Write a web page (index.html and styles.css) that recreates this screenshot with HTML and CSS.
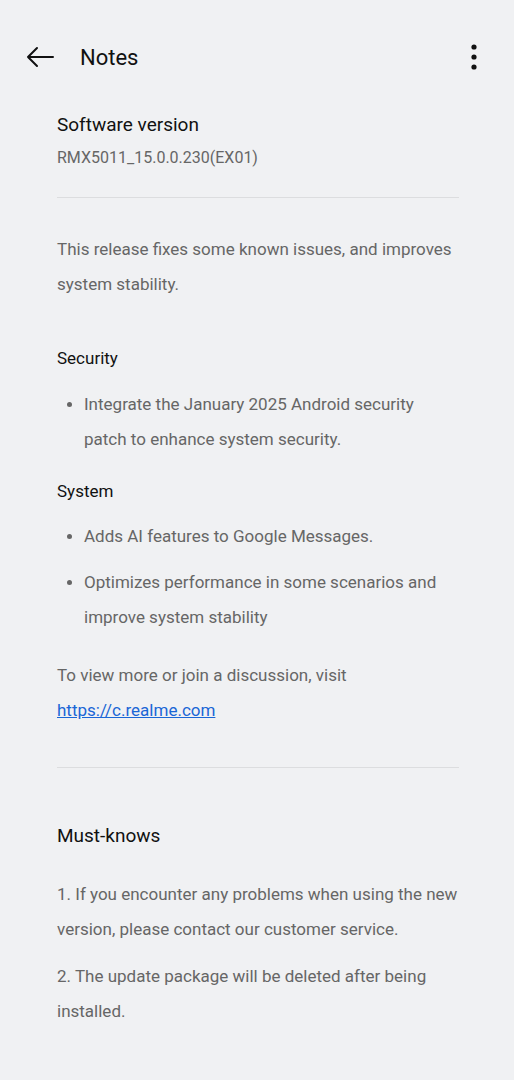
FILE: index.html
```html
<!DOCTYPE html>
<html lang="en">
<head>
<meta charset="UTF-8" />
<meta name="viewport" content="width=device-width, initial-scale=1.0"/>
<title>Notes</title>
<link rel="stylesheet" href="styles.css">
</head>
<body>

<header class="topbar">
  <svg class="back" width="28" height="22" viewBox="0 0 28 22">
    <path d="M27 11H2M11 2L2 11L11 20" fill="none" stroke="#111" stroke-width="2" stroke-linecap="round" stroke-linejoin="round"/>
  </svg>
  <h1>Notes</h1>
  <svg class="more" width="8" height="26" viewBox="0 0 8 26">
    <circle cx="4" cy="3" r="2.6" fill="#111"/>
    <circle cx="4" cy="13" r="2.6" fill="#111"/>
    <circle cx="4" cy="23" r="2.6" fill="#111"/>
  </svg>
</header>

<main class="content">
  <section class="version">
    <h2>Software version</h2>
    <div class="build">RMX5011_15.0.0.230(EX01)</div>
  </section>

  <hr class="divider">

  <section class="notes">
    <p class="intro">This release fixes some known issues, and improves system stability.</p>

    <h3>Security</h3>
    <ul>
      <li>Integrate the January 2025 Android security patch to enhance system security.</li>
    </ul>

    <h3 class="tight">System</h3>
    <ul>
      <li>Adds AI features to Google Messages.</li>
      <li>Optimizes performance in some scenarios and improve system stability</li>
    </ul>

    <p class="visit">To view more or join a discussion, visit<br><a href="#">https://c.realme.com</a></p>
  </section>

  <hr class="divider second">

  <section class="must">
    <h2>Must-knows</h2>
    <p>1. If you encounter any problems when using the new version, please contact our customer service.</p>
    <p>2. The update package will be deleted after being installed.</p>
  </section>
</main>

</body>
</html>
```

FILE: styles.css
```css
body {
  margin: 0;
  background: #f0f1f3;
  font-family: Roboto, sans-serif;
  color: #111;
}

.topbar {
  display: flex;
  align-items: center;
  height: 60px;
  padding: 27px 0 0 26px;
}

.topbar h1 {
  margin: 0 0 0 26px;
  font-size: 22px;
  font-weight: 400;
  flex: 1;
}

.topbar .more {
  margin-right: 36px;
}

.content {
  padding: 0 55px 0 57px;
}

.version h2 {
  margin: 26px 0 0;
  font-size: 19px;
  font-weight: 400;
}

.build {
  margin-top: 12px;
  font-size: 16px;
  color: #666;
}

.divider {
  border: none;
  border-top: 1px solid #dcdddf;
  margin: 30px 0 0;
}

.notes p,
.notes li,
.must p {
  font-size: 17px;
  line-height: 35px;
  color: #666;
}

.intro {
  margin: 34px 0 0;
}

.notes h3 {
  margin: 46px 0 0;
  font-size: 17px;
  font-weight: 400;
}

.notes h3.tight {
  margin-top: 24px;
}

.notes ul {
  margin: 19px 0 0;
  padding-left: 27px;
}

.notes li {
  margin-bottom: 11px;
}

.notes h3.tight + ul {
  margin-top: 18px;
}

.notes li::marker {
  font-size: 16px;
}

.visit {
  margin: 23px 0 0;
  line-height: 36px;
}

.visit a {
  color: #1a66d6;
}

.divider.second {
  margin-top: 39px;
}

.must h2 {
  margin: 56px 0 0;
  font-size: 19px;
  font-weight: 400;
}

.must p {
  margin: 30px 0 0;
}

.must p + p {
  margin-top: 12px;
}
```
